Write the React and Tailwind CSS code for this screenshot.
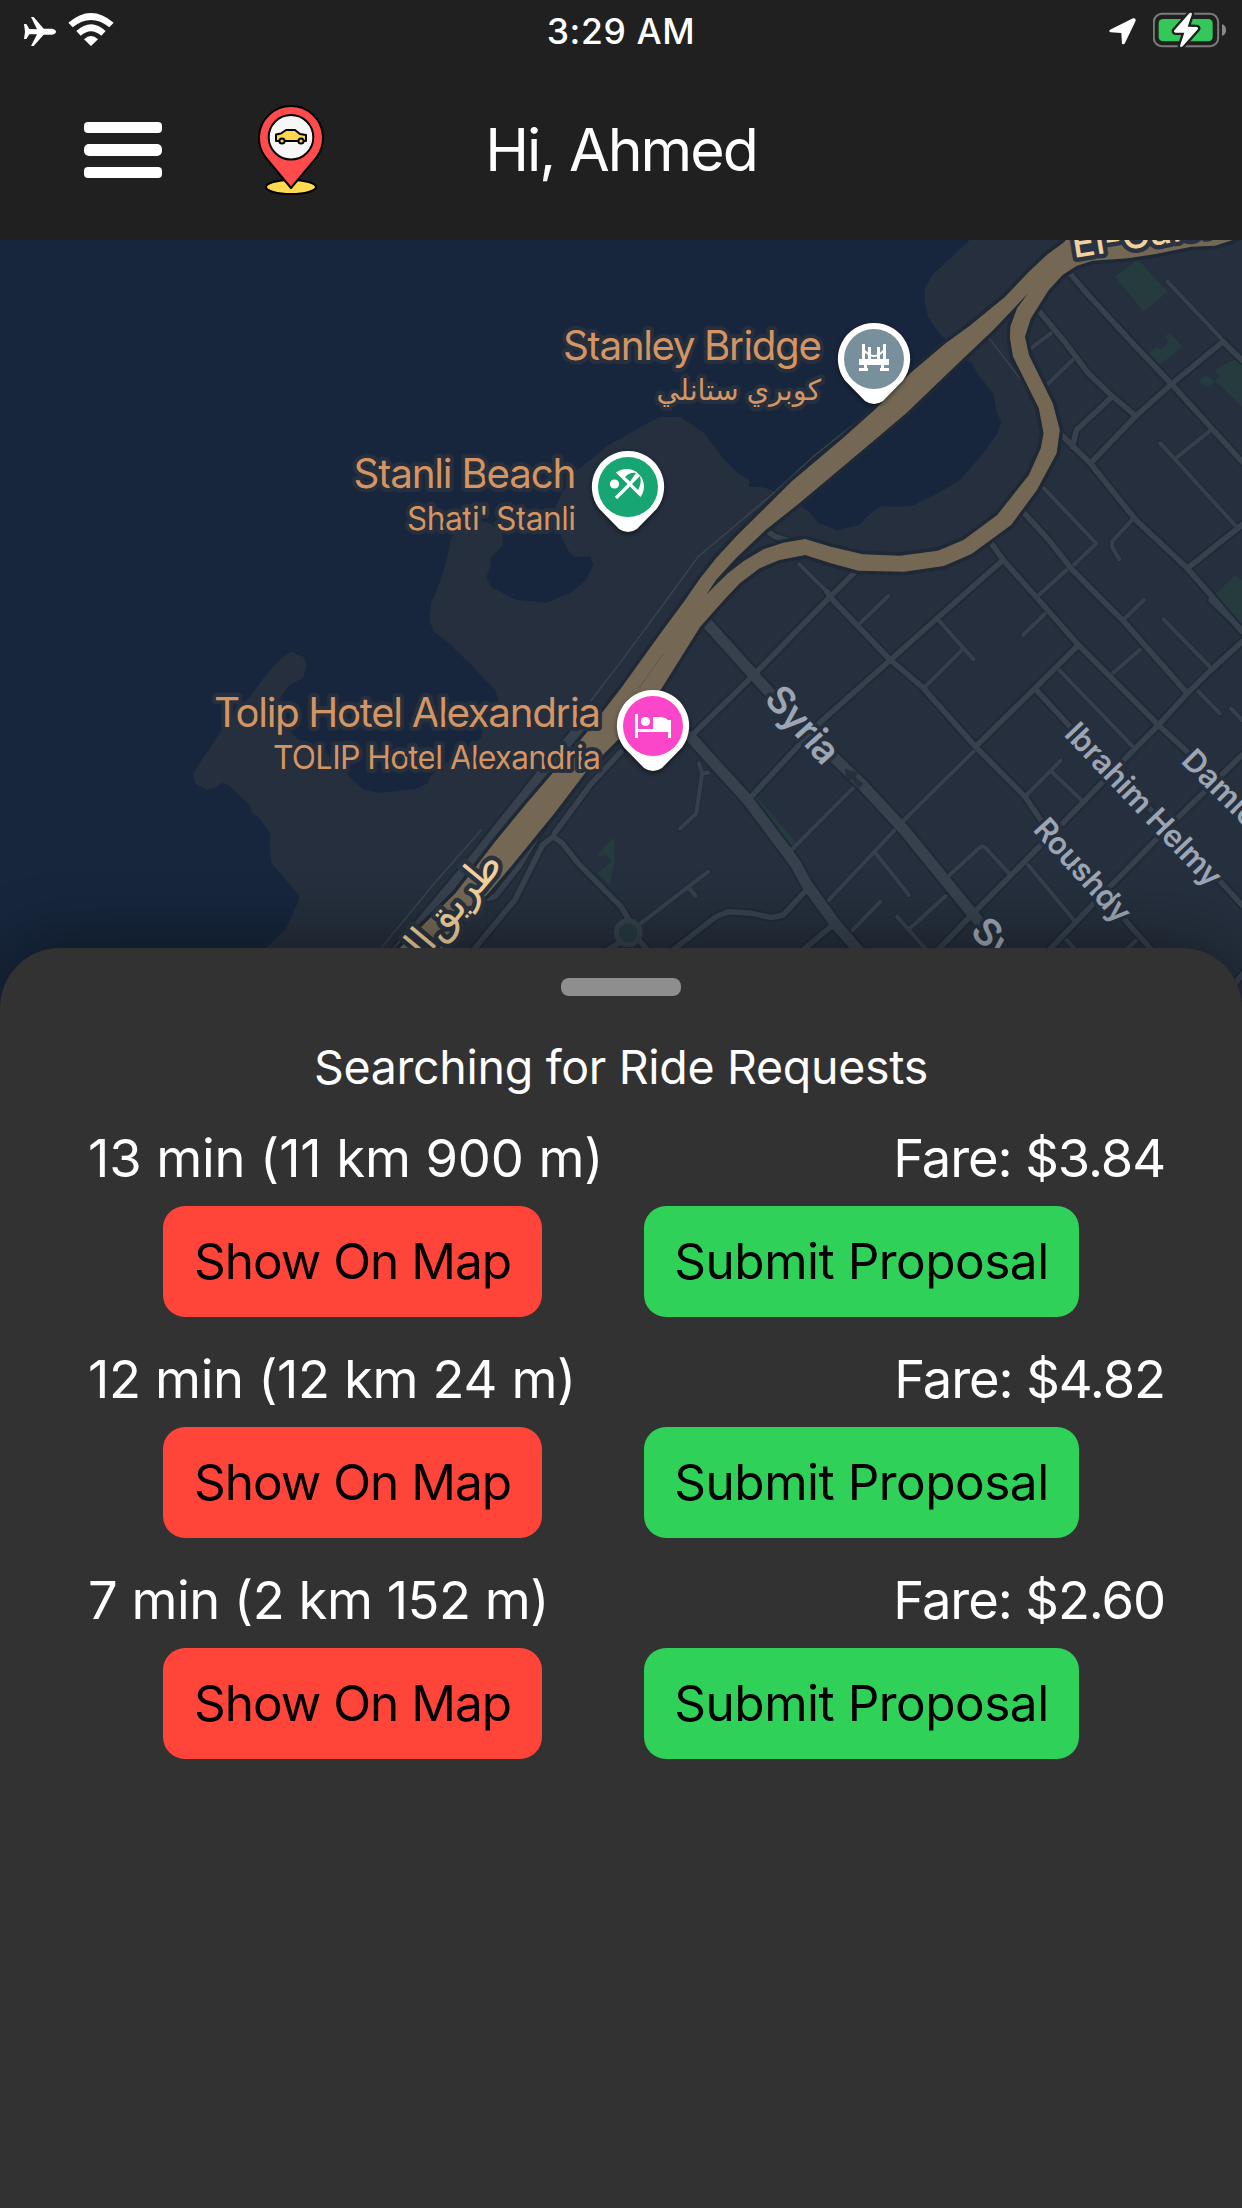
const LAND =
  "M880 30L840 75L790 130L768 170L766 210L775 260L800 305L830 340L870 390L885 400L905 440L940 490L948 545L960 575L950 610L915 670L885 710L855 750L800 790L740 825L695 830L655 828L640 840L600 885L545 900L500 880L475 845L450 825L390 785L360 772L322 770L325 750L295 730L255 680L210 610L150 560L95 562L50 590L0 625L-38 650L-78 690L-110 720L-150 790L-168 840L-153 910L-135 960L-118 982L-78 980L-70 1005L-88 1050L-128 1088L-168 1108L-188 1118L-263 1110L-273 1105L-328 1070L-340 1040L-328 1005L-330 985L-298 945L-300 915L-330 878L-378 870L-428 920L-438 980L-450 1030L-473 1105L-478 1110L-484 1170L-473 1205L-438 1235L-378 1305L-318 1380L-310 1410L-350 1500L-353 1525L-400 1560L-483 1640L-488 1660L-518 1677L-608 1688L-648 1680L-673 1655L-693 1630L-750 1560L-813 1530L-843 1495L-868 1420L-863 1410L-838 1365L-803 1345L-793 1305L-800 1282L-833 1265L-863 1290L-903 1345L-943 1410L-1008 1500L-1081 1630L-1076 1660L-1046 1680L-1023 1672L-1006 1658L-988 1668L-938 1725L-930 1750L-913 1765L-885 1810L-888 1850L-883 1900L-813 1995L-813 2010L-848 2100L-896 2153L-940 2200L-940 2400L1700 2400L1700 30Z";

const HIGHWAY =
  "M1140 0L1120 35L1075 75L1030 125L970 200L880 288L820 340L730 430L640 540L560 625L430 755L350 850L290 920L240 985L200 1045L162 1110L100 1210L0 1375L-88 1510L-173 1630L-238 1720L-318 1835L-418 1990L-558 2153L-680 2300L-540 2300L-450 2153L-398 2070L-328 1980L-278 1910L-168 1750L-88 1625L0 1520L100 1380L200 1190L260 1110L300 1060L350 1015L400 990L465 975L530 1000L600 1022L715 1025L815 1008L885 972L985 885L1050 780L1100 670L1108 600L1090 520L1030 375L1020 320L1035 265L1080 180L1115 135L1150 108L1190 92L1280 85L1350 72L1440 50L1500 47L1545 30L1600 0Z M1028 190L1000 235L983 290L982 325L990 380L1055 535L1067 610L1060 655L1030 735L950 855L865 930L800 962L705 977L610 973L530 950L465 927L410 938L360 958L310 993L270 1030L235 1070L215 1095L240 1050L290 985L365 900L450 820L520 750L620 650L720 550L860 390L940 300Z";

const PARKS = [
  "M1305 88L1380 185L1320 245L1247 140Z",
  "M1385 308L1418 350L1360 405L1333 370L1350 352L1365 358L1382 335L1375 318Z",
  "M1550 388L1568 400L1568 530L1512 465L1500 455L1478 472L1458 455L1475 435L1500 455L1512 440L1500 420Z",
  "M1550 1035L1568 1050L1568 1185L1500 1095Z",
  "M340 1695L440 1835L428 1850L328 1710Z",
  "M-18 1822L-16 1890L-28 1965L-60 1930L-23 1895L-38 1875L-56 1880L-58 1870Z",
];

const STREETS_LG = [
  "M210 1170L335 1335L400 1420L540 1585L610 1665L715 1800L890 2055L980 2180",
  "M175 1520L320 1710L440 1900L470 1965L540 2080L610 2175",
  "M-70 1440L-128 1530L-198 1630L-278 1750L-368 1885L-488 2055L-570 2170",
];

const STREETS_MD = [
  "M1130 125L1180 195L1300 350L1390 462L1568 695",
  "M1050 235L1120 335L1180 430L1240 498L1300 558",
  "M1568 390L1520 335L1390 462L1300 558L1185 700",
  "M1240 500L1150 600L1140 650",
  "M1108 610L1185 700L1300 870L1430 1015L1500 1110L1568 1205",
  "M1430 1015L1568 885",
  "M1015 845L1080 930L1140 1020L1215 1110L1270 1175L1430 1390",
  "M932 935L965 990L1055 1110L1155 1245L1357 1485L1430 1565",
  "M965 990L850 1110L680 1290L500 1480L325 1705",
  "M600 1015L520 1110L335 1335L180 1515",
  "M520 1085L535 1110L680 1290L760 1370L895 1550L1020 1700L1060 1770L1280 2080L1340 2160",
  "M365 900L390 920L430 935",
  "M0 1565L-78 1665L-168 1810",
  "M-368 2153L-268 2010L-198 1845L-171 1820L-148 1840L-108 1900L0 2030L20 2070",
  "M-188 1770L-258 1910L-318 2000L-335 2005",
  "M45 2130L75 2170M0 2135L-40 2165",
  "M120 2170L240 2060L270 2045L330 2050L380 2063L410 2055L468 1980",
  "M1155 1245L1045 1375L895 1550",
  "M1045 1375L1130 1485L1510 1950L1568 2025",
  "M1568 1235L1485 1325L1430 1390L1357 1485L1270 1590L1115 1780",
  "M1490 1110L1568 1200",
  "M1568 1575L1400 1770L1230 1975L1085 2155",
  "M1060 1845L885 2055L800 2160",
  "M540 2080L455 2165",
  "M1575 2225L1540 2275",
];

const STREETS_SM = [
  "M1380 155L1515 325",
  "M1485 605L1400 685M1362 640L1550 885",
  "M1068 775L1200 940L1145 1003M1125 1020L1055 1095",
  "M1290 870L1240 935L1240 950L1258 988",
  "M450 1003L520 1085",
  "M675 1098L605 1178",
  "M1035 355L1085 310M1075 465L1140 390",
  "M50 2080L220 1925M170 1970L188 1998",
  "M197 1600L205 1630L190 1750L150 1795M205 1630L220 1628",
  "M585 1675L430 1860",
  "M690 1802L640 1865L525 2010M640 1865L727 1995",
  "M890 1565L715 1770",
  "M820 1998L730 2095M697 2060L775 2165M655 2015L585 2100",
  "M830 1935L905 1853Q912 1845 920 1853L978 1928",
  "M805 1175L890 1288M865 1255L768 1370",
  "M1070 1152L1015 1215M1108 1322L1290 1547M1310 1260L1243 1328M1320 1110L1272 1165",
  "M1370 1168L1485 1308M1458 1385L1512 1450M1540 1435L1568 1470",
  "M1110 1592L1020 1700M1087 1625L1160 1707",
  "M1028 1905L1145 2072M1125 2130L1145 2155M1300 2132L1275 2160",
];

const TRAILS = [
  "M645 530L490 675L380 795L195 980L115 1110L0 1295L-78 1415",
  "M-353 1800L-468 1955L-603 2150",
  "M930 325L1010 450",
];

function Streets({ paths, color, width }) {
  return (
    <g fill="none" stroke={color} strokeWidth={width} strokeLinecap="round" strokeLinejoin="round">
      {paths.map((d) => (
        <path key={d} d={d} vectorEffect="non-scaling-stroke" />
      ))}
    </g>
  );
}

function Terrain() {
  return (
    <svg className="absolute inset-0 h-[760px] w-full" viewBox="-1568 30 3136 2280" preserveAspectRatio="none">
      <rect x="-1568" y="30" width="3136" height="2280" fill="#17263c" />
      <path d={LAND} fill="#252f3d" />
      {PARKS.map((d) => (
        <path key={d} d={d} fill="#253b3e" />
      ))}
      <Streets paths={TRAILS} color="#38434f" width={1.5} />
      <Streets paths={STREETS_SM} color="#222b38" width={6} />
      <Streets paths={STREETS_MD} color="#202936" width={9} />
      <Streets paths={STREETS_LG} color="#202936" width={15} />
      <Streets paths={STREETS_SM} color="#36404d" width={4} />
      <Streets paths={STREETS_MD} color="#36414d" width={5.5} />
      <Streets paths={STREETS_LG} color="#36414d" width={11} />
      <ellipse cx="18" cy="2108" rx="30" ry="36" fill="#253b3e" stroke="#36414d" strokeWidth="5" vectorEffect="non-scaling-stroke" />
      <path d={HIGHWAY} fill="none" stroke="#1f2835" strokeWidth="7" vectorEffect="non-scaling-stroke" />
      <path d={HIGHWAY} fill="#746855" fillRule="evenodd" />
      <path d="M45 1375L108 1270" stroke="#5f5748" strokeWidth="1" vectorEffect="non-scaling-stroke" />
      <path d="M565 1616L600 1628L592 1640L612 1662L600 1674L582 1648L572 1656Z" fill="#262f3b" />
    </svg>
  );
}

function Poi({ x, y, color, children }) {
  return (
    <g transform={`translate(${x} ${y})`}>
      <path
        d="M0 -36A36 36 0 0 1 29 21.500L9 42Q0 48 -9 42L-29 21.500A36 36 0 0 1 0 -36Z"
        fill="#fff"
        className="drop-shadow-[0_2px_2px_rgba(0,0,0,0.5)]"
      />
      <circle r="30" fill={color} />
      {children}
    </g>
  );
}

function MapLabels() {
  return (
    <svg
      className="absolute inset-0 h-[760px] w-full font-['Inter','DejaVu_Sans',sans-serif]"
      viewBox="0 240 1242 760"
      strokeLinejoin="round"
    >
      <g fill="#d59563" stroke="#252f3d" strokeWidth="8" paintOrder="stroke" textAnchor="end">
        <g fontSize="40.500">
          <text x="822" y="360" textLength="259">Stanley Bridge</text>
          <text x="576.500" y="488" textLength="223">Stanli Beach</text>
          <text x="601" y="727" textLength="387">Tolip Hotel Alexandria</text>
        </g>
        <g fontSize="32">
          <text x="821" y="400" textAnchor="start" direction="rtl" fontSize="28.500">كوبري ستانلي</text>
          <text x="576" y="530" textLength="169">Shati' Stanli</text>
          <text x="601" y="768.500" textLength="328">TOLIP Hotel Alexandria</text>
        </g>
      </g>
      <g fill="#9ca5b3" stroke="#252f3d" strokeWidth="7" paintOrder="stroke" fontWeight="600">
        <text transform="translate(763 700) rotate(48)" fontSize="38" textLength="90">Syria</text>
        <text transform="translate(969 932) rotate(48)" fontSize="38" textLength="90">Syria</text>
        <text transform="translate(1063 735) rotate(46.500)" fontSize="31" textLength="212">Ibrahim Helmy</text>
        <text transform="translate(1032 830) rotate(48)" fontSize="31" textLength="128">Roushdy</text>
        <text transform="translate(1180 762) rotate(45)" fontSize="31" textLength="134">Damietta</text>
      </g>
      <g fill="#f3d19c" stroke="#2a3341" strokeWidth="9" paintOrder="stroke" fontWeight="500">
        <text transform="translate(1074 258) rotate(-9)" fontSize="38">El-Gaish</text>
        <text transform="translate(504 865) rotate(-50)" fontSize="41" direction="rtl" className="[word-spacing:-10px]">
          طريق الجيش
        </text>
      </g>

      <Poi x="874" y="359" color="#78909c">
        <g fill="#fff">
          <path d="M-12 -15h3v16h-3zM9 -15h3v16h-3zM-6 -12h3v13h-3zM3 -12h3v13h-3zM-15 0h30v6h-30zM-10 6h3v6h-3zM7 6h3v6h-3zM-15 9h9v3h-9zM6 9h9v3h-9z" />
          <path d="M-11 -10Q0 4 11 -10" fill="none" stroke="#fff" strokeWidth="2" />
        </g>
      </Poi>
      <Poi x="628" y="487" color="#17a673">
        <circle cx="-13.500" cy="-3" r="4.600" fill="#fff" />
        <path d="M-12 11L2 -3" stroke="#fff" strokeWidth="3.200" />
        <path d="M-12 -14.500A17.500 17.500 0 0 1 12.500 10Z" fill="#fff" />
        <path d="M-3 -10Q2 -15 8 -14L2 -5.500ZM4 -3L12 -11Q14 -4 10 3Z" fill="#17a673" />
      </Poi>
      <Poi x="653" y="726" color="#fb46c9">
        <path d="M-18 -12h3v15h15v-12h8q7 1 7 4v-1h3v18h-3v-6h-30v6h-3z" fill="#fff" />
        <circle cx="-7.500" cy="-4.500" r="4.600" fill="#fff" />
      </Poi>
    </svg>
  );
}

function StatusBar() {
  return (
    <div className="flex h-[60px] items-start justify-between pl-6 pr-4">
      <div className="flex w-[200px] items-start gap-3 pt-[13px]">
        <svg className="mt-1 h-[29px] w-8" viewBox="72 51 96 87" fill="#fff">
          <path d="M72 72L79 72L88 87L111 88L93 51L101 51L131 86L156 86Q168 89 168 95Q168 101 156 104L131 104L101 138L93 138L111 103L88 103L79 117L72 117L75 95Z" />
        </svg>
        <svg className="h-[33px] w-[46px]" viewBox="204 39 138 99" fill="#fff">
          <path d="M205 68Q273 10 341 68L328 82Q273 38 218 82ZM229 93Q273 52 317 93L304 107Q273 80 242 107ZM252 118Q273 98 294 118L273 138Z" />
        </svg>
      </div>
      <div className="-ml-2 pt-[9px] text-[35.500px] font-medium leading-[46px] tracking-[0.600px]">3:29 AM</div>
      <div className="flex w-[200px] items-start justify-end gap-[17px] pt-3">
        <svg className="mt-[6px] h-[27px] w-[27px]" viewBox="28 53 81 81" fill="#fff">
          <path d="M100 54Q109 52 108 61L76 128Q72 134 67 130L65 98L33 96Q26 93 31 88Z" />
        </svg>
        <svg className="h-9 w-[73px]" viewBox="159 36 219 108">
          <rect x="161.500" y="41.500" width="193" height="97" rx="24" fill="none" stroke="#7b7b7b" strokeWidth="6" />
          <path d="M366 72Q378 77 378 90Q378 103 366 108Z" fill="#8a8a8a" />
          <rect x="176" y="57" width="162" height="67" rx="13" fill="#34c759" />
          <path
            d="M268 40L222 92Q221 97 226 98L253 98L240 138Q242 144 248 139L294 87Q296 82 290 81L263 80L276 42Q274 36 268 40Z"
            fill="#fff"
            stroke="#202020"
            strokeWidth="14"
            paintOrder="stroke"
          />
        </svg>
      </div>
    </div>
  );
}

function Logo() {
  return (
    <svg className="h-[92px] w-[68px]" viewBox="0 0 68 92" stroke="#000" strokeWidth="2">
      <ellipse cx="34" cy="83" rx="25" ry="7" fill="#ffd94f" />
      <path d="M34 84L9 54A32 32 0 1 1 59 54Z" fill="#ff4b4b" strokeLinejoin="round" />
      <circle cx="34" cy="33.300" r="22.300" fill="#f7f7f7" />
      <path
        d="M19 37V30.500L24 29.500L29 26H38L43 30L49 31V37Z"
        fill="#ffd54f"
        strokeLinejoin="round"
      />
      <circle cx="25" cy="37" r="2.600" fill="#ffd54f" />
      <circle cx="44" cy="37" r="2.600" fill="#ffd54f" />
    </svg>
  );
}

function NavBar() {
  return (
    <div className="relative flex h-[180px] items-start pl-[84px]">
      <button className="mt-[62px] flex h-14 w-[78px] flex-col justify-between" aria-label="Menu">
        <span className="h-[11px] w-full rounded-[4px] bg-white" />
        <span className="h-3 w-full rounded-[5px] bg-white" />
        <span className="h-[11px] w-full rounded-[4px] bg-white" />
      </button>
      <div className="ml-[95px] mt-11">
        <Logo />
      </div>
      <h1 className="absolute inset-x-0 top-[50px] text-center text-[59px] font-normal leading-[80px] tracking-[-2px]">
        Hi, Ahmed
      </h1>
    </div>
  );
}

const REQUESTS = [
  { trip: "13 min (11 km 900 m)", fare: "Fare: $3.84", tracking: "tracking-[-0.130px]" },
  { trip: "12 min (12 km 24 m)", fare: "Fare: $4.82", tracking: "tracking-[-0.350px]" },
  { trip: "7 min (2 km 152 m)", fare: "Fare: $2.60", tracking: "tracking-[-0.480px]" },
];

function RideRequest({ trip, fare, tracking }) {
  return (
    <li className="mb-3.5">
      <div className="flex h-24 items-center justify-between pl-[88px] pr-[77px] text-[52.500px]">
        <span className={tracking}>{trip}</span>
        <span className="tracking-[-1.100px]">{fare}</span>
      </div>
      <div className="flex gap-[102px] pl-[163px] text-[49.500px] text-black">
        <button className="h-[111px] w-[379px] rounded-[22px] bg-[#ff453a] tracking-[-1px]">Show On Map</button>
        <button className="h-[111px] w-[435px] rounded-[22px] bg-[#30d158] tracking-[-0.500px]">Submit Proposal</button>
      </div>
    </li>
  );
}

export default function App() {
  return (
    <div className="flex h-[2208px] w-[1242px] flex-col overflow-hidden bg-[#202020] font-['Inter',sans-serif] text-white">
      <header className="h-[240px] shrink-0 bg-[#202020]">
        <StatusBar />
        <NavBar />
      </header>
      <section className="relative h-[708px] shrink-0">
        <Terrain />
        <MapLabels />
      </section>
      <main className="relative flex grow flex-col rounded-t-[60px] bg-[#323232] shadow-[0_0_70px_rgba(0,0,0,0.45)]">
        <div className="mx-auto mt-[30px] h-[18px] w-[120px] rounded-lg bg-[#8e8e8e]" />
        <h2 className="mt-[41px] text-center text-[46.500px] leading-[60px] tracking-[-0.300px]">Searching for Ride Requests</h2>
        <ul className="mt-[13px]">
          {REQUESTS.map((request) => (
            <RideRequest key={request.trip} {...request} />
          ))}
        </ul>
      </main>
    </div>
  );
}
